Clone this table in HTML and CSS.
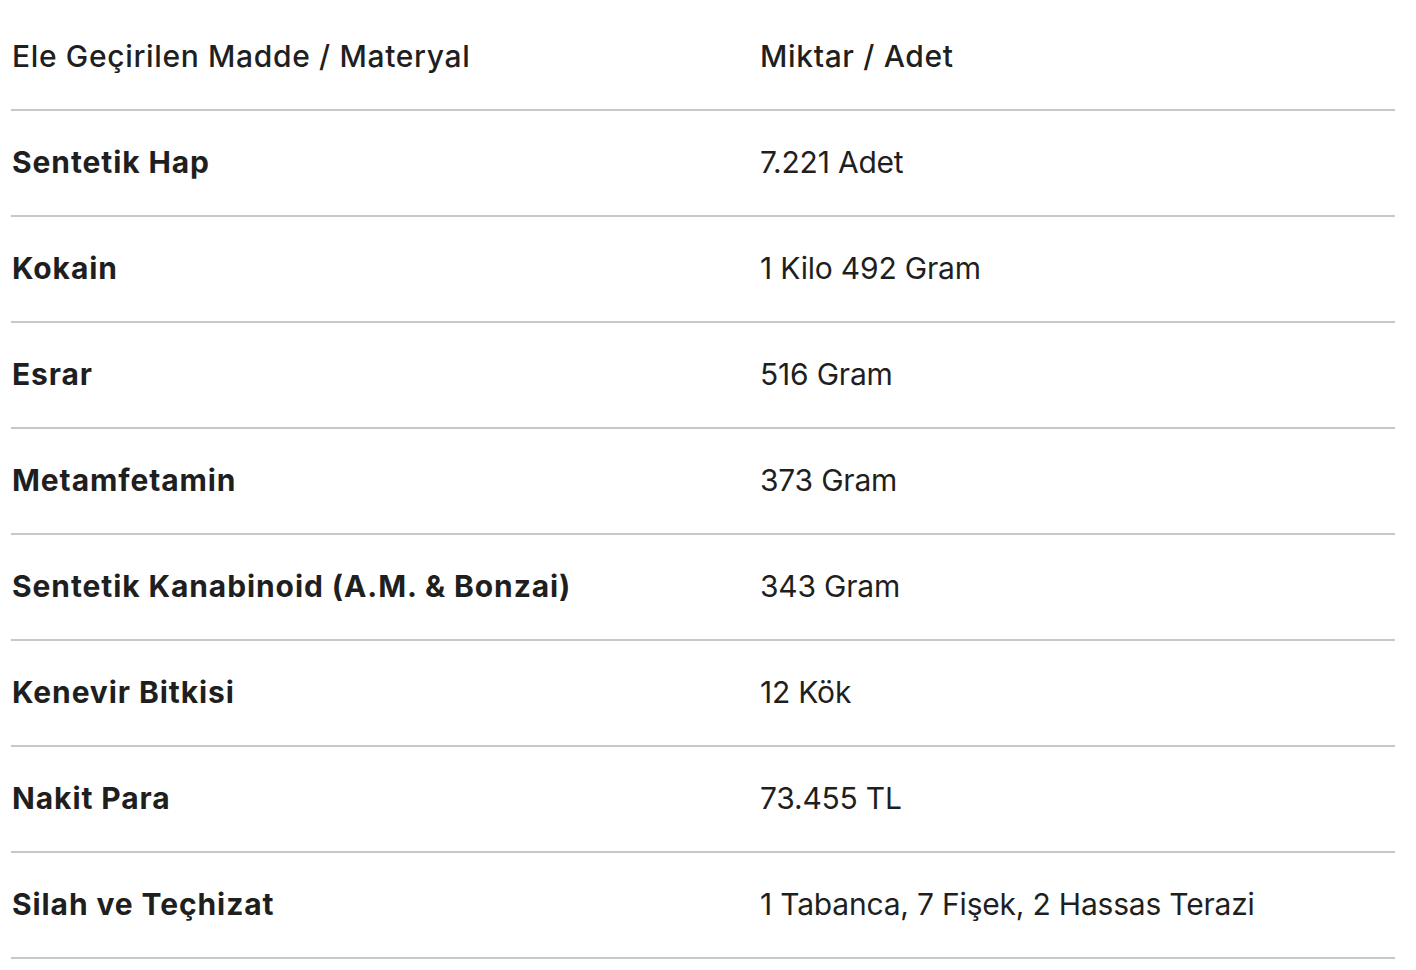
FILE: index.html
```html
<!DOCTYPE html>
<html lang="tr">
<head>
<meta charset="utf-8">
<link rel="stylesheet" href="styles.css">
</head>
<body>
<table class="seizure">
  <thead>
    <tr><th class="col-item">Ele Geçirilen Madde / Materyal</th><th class="col-qty">Miktar / Adet</th></tr>
  </thead>
  <tbody>
    <tr><td class="item">Sentetik Hap</td><td class="qty">7.221 Adet</td></tr>
    <tr><td class="item">Kokain</td><td class="qty">1 Kilo 492 Gram</td></tr>
    <tr><td class="item">Esrar</td><td class="qty">516 Gram</td></tr>
    <tr><td class="item">Metamfetamin</td><td class="qty">373 Gram</td></tr>
    <tr><td class="item">Sentetik Kanabinoid (A.M. &amp; Bonzai)</td><td class="qty">343 Gram</td></tr>
    <tr><td class="item">Kenevir Bitkisi</td><td class="qty">12 Kök</td></tr>
    <tr><td class="item">Nakit Para</td><td class="qty">73.455 TL</td></tr>
    <tr><td class="item">Silah ve Teçhizat</td><td class="qty">1 Tabanca, 7 Fişek, 2 Hassas Terazi</td></tr>
  </tbody>
</table>
</body>
</html>
```
FILE: styles.css
```css
html, body {
  margin: 0;
  background: #ffffff;
}
body {
  padding: 5px 21px 0 11px;
  font-family: Inter, Roboto, "Noto Sans", sans-serif;
  color: #1f1f1f;
}
.seizure {
  width: 1384px;
  border-collapse: collapse;
  table-layout: fixed;
}
.seizure th,
.seizure td {
  height: 102px;
  padding: 0 1px 2px;
  border-bottom: 2px solid #c7c7c7;
  text-align: left;
  vertical-align: middle;
  font-size: 30px;
  line-height: 36px;
}
.seizure th {
  font-weight: 500;
  letter-spacing: 0.65px;
}
.col-item { width: 746px; }
.item { font-weight: 700; letter-spacing: 0.9px; }
.qty { font-weight: 400; letter-spacing: -0.2px; }
```
